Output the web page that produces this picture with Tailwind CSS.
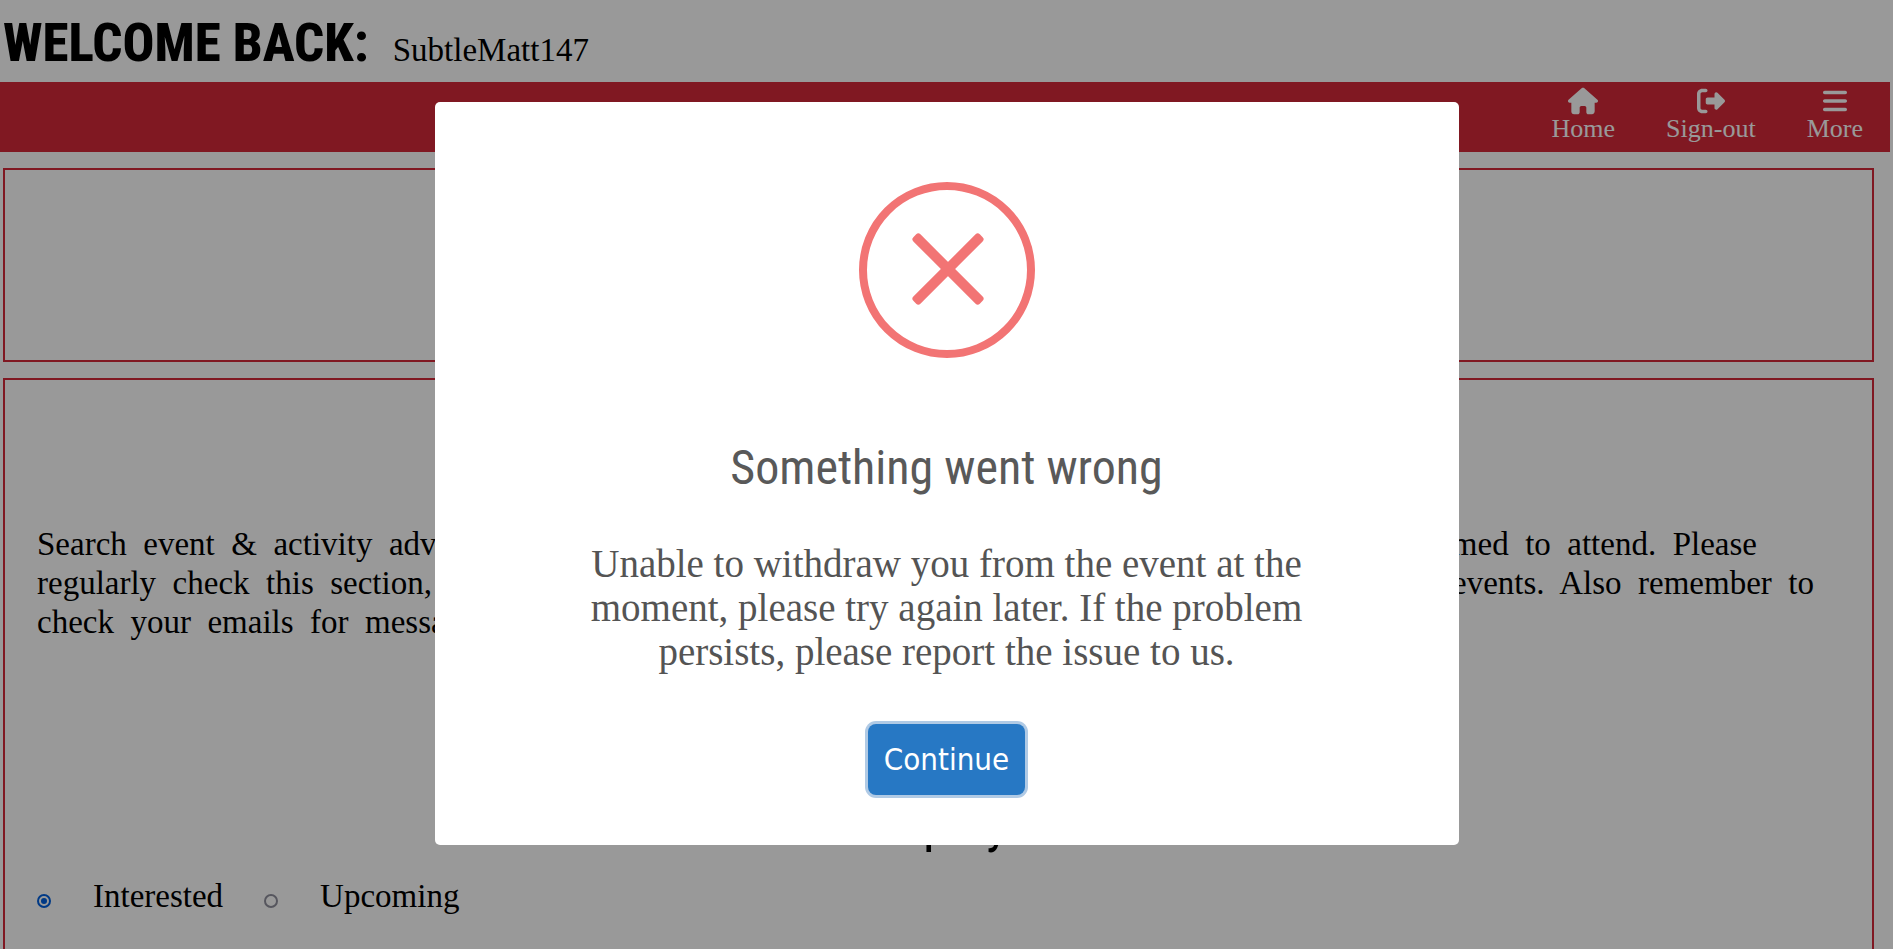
<!DOCTYPE html>
<html lang="en">
<head>
<meta charset="utf-8">
<meta name="viewport" content="width=device-width, initial-scale=1">
<title>My events</title>
<script src="https://cdn.jsdelivr.net/npm/@tailwindcss/browser@4"></script>
</head>
<body class="h-screen overflow-hidden bg-white pr-[3px] font-['Liberation_Serif',serif] text-[33px] leading-[39px] text-black">
  <header class="flex h-[82px] items-baseline gap-6 pl-[3px] pt-[7px]">
    <h1 class="font-['Roboto_Condensed','DejaVu_Sans_Condensed',sans-serif] text-[53px] font-extrabold leading-[72px]">WELCOME BACK:</h1>
    <span>SubtleMatt147</span>
  </header>

  <nav class="flex h-[70px] justify-end gap-[51px] bg-[#d62839] pr-[27px] pt-[5px] text-[26px] leading-7 text-white">
    <a href="#" class="flex flex-col items-center">
      <svg class="h-[28px] w-[30px]" viewBox="0 0 576 512" fill="currentColor" aria-hidden="true"><path d="M575.800 255.500c0 18-15 32.100-32 32.100l-32 0 .7 160.200c0 35.500-18.700 64.200-54.500 64.200L392 512c-22.100 0-40-17.900-40-40l0-88c0-17.700-14.300-32-32-32l-64 0c-17.700 0-32 14.300-32 32l0 88c0 22.100-17.900 40-40 40l-66 0c-35.800 0-54-24-54-54.300l0-170.100-32 0c-18 0-32-14-32-32.100c0-9 3-17 10-24L266.400 8c7-7 15-8 22-8s15 2 21 7L564.800 231.500c8 7 12 15 11 24z"/></svg>
      <span>Home</span>
    </a>
    <a href="#" class="flex flex-col items-center">
      <svg class="h-[28px] w-[28px]" viewBox="0 0 512 512" fill="currentColor" aria-hidden="true"><path d="M502.600 278.600c12.500-12.500 12.500-32.800 0-45.300l-128-128c-9.200-9.200-22.900-11.900-34.900-6.900S320 115.100 320 128v64H192c-17.700 0-32 14.300-32 32v64c0 17.700 14.300 32 32 32h128v64c0 12.900 7.800 24.600 19.800 29.600s25.700 2.200 34.900-6.900l128-128zM160 96c17.700 0 32-14.300 32-32s-14.300-32-32-32H96C43 32 0 75 0 128v256c0 53 43 96 96 96h64c17.700 0 32-14.300 32-32s-14.300-32-32-32H96c-17.700 0-32-14.300-32-32V128c0-17.700 14.300-32 32-32h64z"/></svg>
      <span>Sign-out</span>
    </a>
    <a href="#" class="flex flex-col items-center">
      <svg class="h-[28px] w-[24px]" viewBox="0 0 448 512" fill="currentColor" aria-hidden="true"><path d="M0 96c0-17.700 14.300-32 32-32h384c17.700 0 32 14.300 32 32s-14.300 32-32 32H32C14.300 128 0 113.700 0 96zm0 160c0-17.700 14.300-32 32-32h384c17.700 0 32 14.300 32 32s-14.300 32-32 32H32c-17.700 0-32-14.300-32-32zm448 160c0 17.700-14.300 32-32 32H32c-17.700 0-32-14.300-32-32s14.300-32 32-32h384c17.700 0 32 14.300 32 32z"/></svg>
      <span>More</span>
    </a>
  </nav>

  <main class="ml-[3px] mr-4 mt-4 flex flex-col gap-4">
    <section class="h-[194px] border-2 border-[#d62839]"></section>

    <section class="border-2 border-[#d62839] px-8 pb-16 pt-[145px]">
      <p class="mr-[83px] flex justify-between whitespace-pre"><span>Search  event  &amp;  activity  adverts  you  have</span><span>or  are  confirmed  to  attend.  Please</span></p>
      <p class="mr-[26px] flex justify-between whitespace-pre"><span>regularly  check  this  section,  to  see</span><span>changes  to  your  events.  Also  remember  to</span></p>
      <p class="whitespace-pre">check  your  emails  for  messages.</p>
      <h2 class="mt-[151px] text-center font-['Roboto_Condensed','DejaVu_Sans_Condensed',sans-serif] text-[53px] leading-[60px]">Display:</h2>
      <form class="mt-6 flex">
        <label class="flex items-center"><input type="radio" name="view" checked class="mr-[42px] mt-2 size-[14px] appearance-none rounded-full border-2 border-[#0060df] bg-[#0060df] bg-clip-content p-[2px]">Interested</label>
        <label class="ml-[41px] flex items-center"><input type="radio" name="view" class="mr-[42px] mt-2 size-[14px] appearance-none rounded-full border-2 border-[#8f8f9d]">Upcoming</label>
      </form>
    </section>
  </main>

  <div class="fixed inset-0 flex items-center justify-center bg-black/40 pb-0.5">
    <div role="dialog" aria-modal="true" aria-labelledby="dialog-title" class="flex w-full max-w-[1024px] flex-col items-center rounded-[5px] bg-white px-32 pb-[50px] pt-20 text-center text-[#545454]">
      <svg class="size-[176px] text-[#f27474]" viewBox="0 0 176 176" fill="none" stroke="currentColor" aria-hidden="true">
        <circle cx="88" cy="88" r="84" stroke-width="8"/>
        <g fill="currentColor" stroke="none">
          <rect x="42" y="82" width="94" height="10" rx="3" transform="rotate(45 89 87)"/>
          <rect x="42" y="82" width="94" height="10" rx="3" transform="rotate(-45 89 87)"/>
        </g>
      </svg>
      <h2 id="dialog-title" class="mt-[74px] font-['Roboto_Condensed','DejaVu_Sans_Condensed',sans-serif] text-[48px] leading-[72px] text-[#595959]">Something went wrong</h2>
      <p class="mt-[38px] text-[39px] leading-[44px]">Unable to withdraw you from the event at the<br>moment, please try again later. If the problem<br>persists, please report the issue to us.</p>
      <button type="button" class="mt-[50px] h-[71px] rounded-lg bg-[#2778c4] px-4 font-['DejaVu_Sans_Condensed','Noto_Sans',sans-serif] text-[31px] leading-[39px] text-white ring-3 ring-[#b0cae5]">Continue</button>
    </div>
  </div>
</body>
</html>
